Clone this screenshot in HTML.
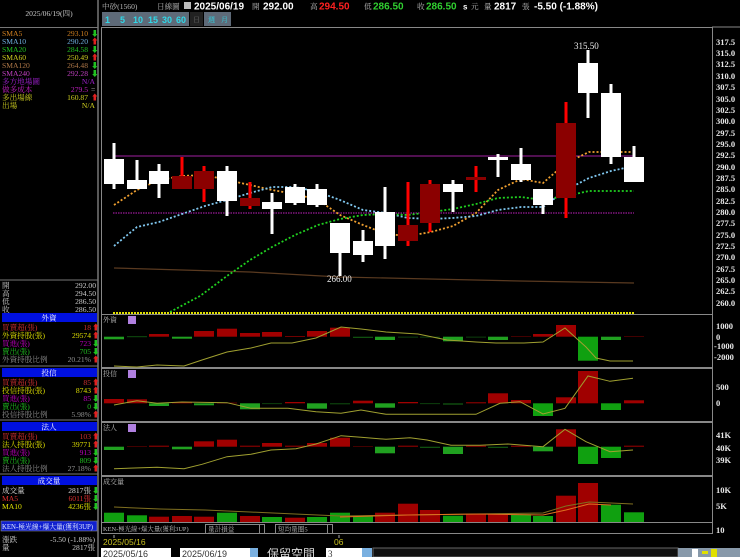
<!DOCTYPE html>
<html><head><meta charset="utf-8"><style>
html,body{margin:0;padding:0;background:#000;width:740px;height:557px;overflow:hidden}
svg{display:block}
text{font-family:"Liberation Serif","Noto Serif CJK SC","Noto Sans CJK TC",serif;font-size:7.6px}
.b{font-family:"Liberation Sans","Noto Sans CJK TC",sans-serif;font-weight:bold;font-size:10px}
.s{font-family:"Liberation Serif",serif;font-weight:bold;font-size:8.5px;fill:#e8e8e8}
</style></head><body>
<svg width="740" height="557" viewBox="0 0 740 557" xmlns="http://www.w3.org/2000/svg">
<rect width="740" height="557" fill="#000"/>
<line x1="98" y1="0" x2="98" y2="557" stroke="#777" stroke-width="1.5"/>
<text x="49" y="16" fill="#ccc" text-anchor="middle">2025/06/19(四)</text>
<line x1="0" y1="27.5" x2="98" y2="27.5" stroke="#777"/>
<g>
<text x="2" y="36" fill="#d08020">SMA5</text><text x="88" y="36" fill="#d08020" text-anchor="end">293.10</text><text x="91" y="36" fill="#20c020">⬇</text>
<text x="2" y="44" fill="#70b0e0">SMA10</text><text x="88" y="44" fill="#70b0e0" text-anchor="end">290.20</text><text x="91" y="44" fill="#e02020">⬆</text>
<text x="2" y="52" fill="#20c020">SMA20</text><text x="88" y="52" fill="#20c020" text-anchor="end">284.58</text><text x="91" y="52" fill="#20c020">⬇</text>
<text x="2" y="60" fill="#d0d020">SMA60</text><text x="88" y="60" fill="#d0d020" text-anchor="end">250.49</text><text x="91" y="60" fill="#e02020">⬆</text>
<text x="2" y="68" fill="#b07848">SMA120</text><text x="88" y="68" fill="#b07848" text-anchor="end">264.48</text><text x="91" y="68" fill="#20c020">⬇</text>
<text x="2" y="76" fill="#c040c0">SMA240</text><text x="88" y="76" fill="#c040c0" text-anchor="end">292.28</text><text x="91" y="76" fill="#20c020">⬇</text>
<text x="2" y="84" fill="#a020d0">多方地場圖</text><text x="95" y="84" fill="#a020d0" text-anchor="end">N/A</text>
<text x="2" y="92" fill="#c020c0">做多成本</text><text x="88" y="92" fill="#c020c0" text-anchor="end">279.5</text><text x="91" y="92" fill="#ccc">=</text>
<text x="2" y="100" fill="#d0d020">多出場線</text><text x="88" y="100" fill="#d0d020" text-anchor="end">160.87</text><text x="91" y="100" fill="#e02020">⬆</text>
<text x="2" y="108" fill="#d0d020">出場</text><text x="95" y="108" fill="#d0d020" text-anchor="end">N/A</text>
</g>
<line x1="0" y1="280" x2="98" y2="280" stroke="#777"/>
<g fill="#ccc">
<text x="2" y="288">開</text><text x="96" y="288" text-anchor="end">292.00</text>
<text x="2" y="296">高</text><text x="96" y="296" text-anchor="end">294.50</text>
<text x="2" y="304">低</text><text x="96" y="304" text-anchor="end">286.50</text>
<text x="2" y="312">收</text><text x="96" y="312" text-anchor="end">286.50</text>
</g>
<rect x="2" y="313" width="95" height="9" fill="#0010e0"/><text x="49" y="320.5" fill="#fff" text-anchor="middle">外資</text>
<text x="2" y="330" fill="#d03030">買賣超(張)</text><text x="91" y="330" fill="#d03030" text-anchor="end">18</text><text x="92" y="330" fill="#e02020">⬆</text>
<text x="2" y="338" fill="#e0e000">外資持股(張)</text><text x="91" y="338" fill="#e0e000" text-anchor="end">29574</text><text x="92" y="338" fill="#e02020">⬆</text>
<text x="2" y="346" fill="#c000c0">買進(張)</text><text x="91" y="346" fill="#c000c0" text-anchor="end">723</text><text x="92" y="346" fill="#20c020">⬇</text>
<text x="2" y="354" fill="#20c020">賣出(張)</text><text x="91" y="354" fill="#20c020" text-anchor="end">705</text><text x="92" y="354" fill="#20c020">⬇</text>
<text x="2" y="362" fill="#909090">外資持股比例</text><text x="91" y="362" fill="#909090" text-anchor="end">20.21%</text><text x="92" y="362" fill="#e02020">⬆</text>
<line x1="0" y1="366" x2="98" y2="366" stroke="#777"/>
<rect x="2" y="368" width="95" height="9" fill="#0010e0"/><text x="49" y="375.5" fill="#fff" text-anchor="middle">投信</text>
<text x="2" y="385" fill="#d03030">買賣超(張)</text><text x="91" y="385" fill="#d03030" text-anchor="end">85</text><text x="92" y="385" fill="#e02020">⬆</text>
<text x="2" y="393" fill="#e0e000">投信持股(張)</text><text x="91" y="393" fill="#e0e000" text-anchor="end">8743</text><text x="92" y="393" fill="#e02020">⬆</text>
<text x="2" y="401" fill="#c000c0">買進(張)</text><text x="91" y="401" fill="#c000c0" text-anchor="end">85</text><text x="92" y="401" fill="#20c020">⬇</text>
<text x="2" y="409" fill="#20c020">賣出(張)</text><text x="91" y="409" fill="#20c020" text-anchor="end">0</text><text x="92" y="409" fill="#20c020">⬇</text>
<text x="2" y="417" fill="#909090">投信持股比例</text><text x="91" y="417" fill="#909090" text-anchor="end">5.98%</text><text x="92" y="417" fill="#e02020">⬆</text>
<line x1="0" y1="420" x2="98" y2="420" stroke="#777"/>
<rect x="2" y="422" width="95" height="9" fill="#0010e0"/><text x="49" y="429.5" fill="#fff" text-anchor="middle">法人</text>
<text x="2" y="439" fill="#d03030">買賣超(張)</text><text x="91" y="439" fill="#d03030" text-anchor="end">103</text><text x="92" y="439" fill="#e02020">⬆</text>
<text x="2" y="447" fill="#e0e000">法人持股(張)</text><text x="91" y="447" fill="#e0e000" text-anchor="end">39771</text><text x="92" y="447" fill="#e02020">⬆</text>
<text x="2" y="455" fill="#c000c0">買進(張)</text><text x="91" y="455" fill="#c000c0" text-anchor="end">913</text><text x="92" y="455" fill="#20c020">⬇</text>
<text x="2" y="463" fill="#20c020">賣出(張)</text><text x="91" y="463" fill="#20c020" text-anchor="end">809</text><text x="92" y="463" fill="#20c020">⬇</text>
<text x="2" y="471" fill="#909090">法人持股比例</text><text x="91" y="471" fill="#909090" text-anchor="end">27.18%</text><text x="92" y="471" fill="#e02020">⬆</text>
<line x1="0" y1="474" x2="98" y2="474" stroke="#777"/>
<rect x="2" y="476" width="95" height="9" fill="#0010e0"/><text x="49" y="483.5" fill="#fff" text-anchor="middle">成交量</text>
<text x="2" y="493" fill="#ddd">成交量</text><text x="91" y="493" fill="#ddd" text-anchor="end">2817張</text><text x="92" y="493" fill="#20c020">⬇</text>
<text x="2" y="501" fill="#e03030">MA5</text><text x="91" y="501" fill="#e03030" text-anchor="end">6011張</text><text x="92" y="501" fill="#20c020">⬇</text>
<text x="2" y="509" fill="#e0e000">MA10</text><text x="91" y="509" fill="#e0e000" text-anchor="end">4236張</text><text x="92" y="509" fill="#20c020">⬇</text>
<rect x="1" y="521" width="96" height="10" fill="#1020d0" stroke="#888" stroke-width="0.6"/>
<text x="2" y="529" fill="#e0e8ff" style="font-size:6.8px">KEN-極光線+爆大量(獲利3UP)</text>
<text x="2" y="542" fill="#ccc">漲跌</text><text x="95" y="542" fill="#ccc" text-anchor="end">-5.50 (-1.88%)</text>
<text x="2" y="550" fill="#ccc">量</text><text x="95" y="550" fill="#ccc" text-anchor="end">2817張</text>

<text x="102" y="9" fill="#bbb">中砂(1560)</text>
<text x="157" y="9" fill="#bbb">日線圖</text>
<rect x="184" y="2" width="7" height="7" fill="#bbb"/>
<text x="194" y="9.5" class="b" fill="#fff">2025/06/19</text>
<text x="252" y="9" fill="#bbb">開</text><text x="263" y="9.5" class="b" fill="#fff">292.00</text>
<text x="310" y="9" fill="#bbb">高</text><text x="319" y="9.5" class="b" fill="#ff2020">294.50</text>
<text x="364" y="9" fill="#bbb">低</text><text x="373" y="9.5" class="b" fill="#30d030">286.50</text>
<text x="417" y="9" fill="#bbb">收</text><text x="426" y="9.5" class="b" fill="#30d030">286.50</text>
<text x="463" y="9.5" class="b" fill="#fff" style="font-size:8px">s</text><text x="471" y="9" fill="#bbb">元</text>
<text x="484" y="9" fill="#bbb">量</text><text x="494" y="9.5" class="b" fill="#fff">2817</text><text x="522" y="9" fill="#bbb">張</text>
<text x="534" y="9.5" class="b" fill="#fff">-5.50 (-1.88%)</text>
<rect x="102" y="12" width="87" height="14" fill="#5e6a78"/>
<text x="105" y="23" class="b" fill="#30d8e8" style="font-size:9px">1</text>
<text x="120" y="23" class="b" fill="#30d8e8" style="font-size:9px">5</text>
<text x="133" y="23" class="b" fill="#30d8e8" style="font-size:9px">10</text>
<text x="148" y="23" class="b" fill="#30d8e8" style="font-size:9px">15</text>
<text x="162" y="23" class="b" fill="#30d8e8" style="font-size:9px">30</text>
<text x="176" y="23" class="b" fill="#30d8e8" style="font-size:9px">60</text>
<rect x="190" y="12" width="13" height="14" fill="#222"/><text x="193" y="22" fill="#666" style="font-size:7px">日</text>
<rect x="204" y="12" width="27" height="14" fill="#5e6a78"/>
<text x="208" y="22" fill="#30d8e8" style="font-size:7px">週</text><text x="221" y="22" fill="#30d8e8" style="font-size:7px">月</text>

<g fill="none" stroke="#888" stroke-width="1">
<rect x="101.5" y="27.5" width="611" height="287"/>
<rect x="101.5" y="314.5" width="611" height="53"/>
<rect x="101.5" y="368.5" width="611" height="53"/>
<rect x="101.5" y="422.5" width="611" height="53"/>
<rect x="101.5" y="476.5" width="611" height="46"/>
<rect x="101.5" y="522.5" width="611" height="11"/>
</g>
<line x1="712" y1="27" x2="740" y2="27" stroke="#888"/>

<g>
<text x="716" y="45" class="s">317.5</text><text x="716" y="56" class="s">315.0</text><text x="716" y="67" class="s">312.5</text><text x="716" y="79" class="s">310.0</text><text x="716" y="90" class="s">307.5</text><text x="716" y="102" class="s">305.0</text><text x="716" y="113" class="s">302.5</text><text x="716" y="124" class="s">300.0</text><text x="716" y="136" class="s">297.5</text><text x="716" y="147" class="s">295.0</text><text x="716" y="158" class="s">292.5</text><text x="716" y="170" class="s">290.0</text><text x="716" y="181" class="s">287.5</text><text x="716" y="192" class="s">285.0</text><text x="716" y="204" class="s">282.5</text><text x="716" y="215" class="s">280.0</text><text x="716" y="226" class="s">277.5</text><text x="716" y="238" class="s">275.0</text><text x="716" y="249" class="s">272.5</text><text x="716" y="260" class="s">270.0</text><text x="716" y="272" class="s">267.5</text><text x="716" y="283" class="s">265.0</text><text x="716" y="294" class="s">262.5</text><text x="716" y="306" class="s">260.0</text>
<text x="716" y="329" class="s">1000</text><text x="716" y="340" class="s">0</text><text x="714" y="349" class="s">-1000</text><text x="714" y="360" class="s">-2000</text>
<text x="716" y="390" class="s">500</text><text x="716" y="406" class="s">0</text>
<text x="716" y="438" class="s">41K</text><text x="716" y="451" class="s">40K</text><text x="716" y="463" class="s">39K</text>
<text x="716" y="493" class="s">10K</text><text x="716" y="509" class="s">5K</text><text x="716" y="533" class="s">10</text>
</g>

<line x1="113" y1="156" x2="634" y2="156" stroke="#a020a0" stroke-width="1"/>
<line x1="113" y1="213" x2="634" y2="213" stroke="#c020c0" stroke-width="1" stroke-dasharray="1.5 1"/>
<polyline points="114,268 250,272 340,277 430,279 520,281 634,283" fill="none" stroke="#5a3a20" stroke-width="1.2"/>
<line x1="113" y1="313" x2="634" y2="313" stroke="#e0e000" stroke-width="2" stroke-dasharray="2 1"/>
<polyline points="114,205 137,190 159,180 182,176 205,175 227,180 250,185 272,190 295,194 318,200 340,215 363,225 386,234 408,236 431,232 453,226 476,213 498,190 521,179 543,183 566,163 589,152 611,152 634,152" fill="none" stroke="#f0a030" stroke-width="1.8" stroke-dasharray="2 2"/>
<polyline points="114,246 137,227 159,222 182,214 205,206 227,200 250,193 272,187 295,187 318,192 340,200 363,210 386,213 408,218 431,219 453,218 476,216 498,210 521,207 543,207 566,190 589,178 611,171 634,166" fill="none" stroke="#80c8f0" stroke-width="1.8" stroke-dasharray="2 2"/>
<polyline points="170,312 200,296 227,276 250,260 272,247 295,235 318,225 340,219 363,215 386,214 408,215 431,212 453,209 476,204 498,198 521,197 543,200 566,196 589,191 611,191 634,191" fill="none" stroke="#20d020" stroke-width="1.8" stroke-dasharray="2 2"/>

<g>
<rect x="112.5" y="143" width="3" height="46" fill="#fff"/><rect x="104" y="159" width="20" height="25" fill="#fff"/>
<rect x="135.5" y="160" width="3" height="29" fill="#fff"/><rect x="127" y="180" width="20" height="9" fill="#fff"/>
<rect x="157.5" y="164" width="3" height="34" fill="#fff"/><rect x="149" y="171" width="20" height="13" fill="#fff"/>
<rect x="180.5" y="157" width="3" height="32" fill="#f00"/><rect x="172" y="176" width="20" height="13" fill="#8b0000"/>
<rect x="202.5" y="166" width="3" height="36" fill="#f00"/><rect x="194" y="171" width="20" height="18" fill="#8b0000"/>
<rect x="225.5" y="166" width="3" height="50" fill="#fff"/><rect x="217" y="171" width="20" height="30" fill="#fff"/>
<rect x="248.5" y="182" width="3" height="27" fill="#f00"/><rect x="240" y="198" width="20" height="8" fill="#8b0000"/>
<rect x="270.5" y="193" width="3" height="41" fill="#fff"/><rect x="262" y="202" width="20" height="7" fill="#fff"/>
<rect x="293.5" y="184" width="3" height="21" fill="#fff"/><rect x="285" y="187" width="20" height="16" fill="#fff"/>
<rect x="315.5" y="184" width="3" height="23" fill="#fff"/><rect x="307" y="189" width="20" height="16" fill="#fff"/>
<rect x="338.5" y="223" width="3" height="53" fill="#fff"/><rect x="330" y="223" width="20" height="30" fill="#fff"/>
<rect x="361.5" y="230" width="3" height="32" fill="#fff"/><rect x="353" y="241" width="20" height="14" fill="#fff"/>
<rect x="383.5" y="187" width="3" height="72" fill="#fff"/><rect x="375" y="212" width="20" height="34" fill="#fff"/>
<rect x="406.5" y="182" width="3" height="64" fill="#f00"/><rect x="398" y="225" width="20" height="16" fill="#8b0000"/>
<rect x="428.5" y="180" width="3" height="52" fill="#f00"/><rect x="420" y="184" width="20" height="39" fill="#8b0000"/>
<rect x="451.5" y="180" width="3" height="32" fill="#fff"/><rect x="443" y="184" width="20" height="8" fill="#fff"/>
<rect x="474.5" y="166" width="3" height="26" fill="#f00"/><rect x="466" y="177" width="20" height="3" fill="#8b0000"/>
<rect x="496.5" y="154" width="3" height="23" fill="#fff"/><rect x="488" y="157" width="20" height="3" fill="#fff"/>
<rect x="519.5" y="148" width="3" height="34" fill="#fff"/><rect x="511" y="164" width="20" height="16" fill="#fff"/>
<rect x="541.5" y="189" width="3" height="25" fill="#fff"/><rect x="533" y="189" width="20" height="16" fill="#fff"/>
<rect x="564.5" y="102" width="3" height="116" fill="#f00"/><rect x="556" y="123" width="20" height="75" fill="#8b0000"/>
<rect x="586.5" y="50" width="3" height="68" fill="#fff"/><rect x="578" y="63" width="20" height="30" fill="#fff"/>
<rect x="609.5" y="84" width="3" height="80" fill="#fff"/><rect x="601" y="93" width="20" height="64" fill="#fff"/>
<rect x="632.5" y="146" width="3" height="36" fill="#fff"/><rect x="624" y="157" width="20" height="25" fill="#fff"/>
</g>
<text x="574" y="49" fill="#eee" style="font-size:9px">315.50</text>
<text x="327" y="282" fill="#eee" style="font-size:9px">266.00</text>

<text x="103" y="322" fill="#bbb" style="font-size:7px">外資</text><rect x="128" y="316" width="8" height="8" fill="#b080e0"/>
<text x="103" y="376" fill="#bbb" style="font-size:7px">投信</text><rect x="128" y="370" width="8" height="8" fill="#b080e0"/>
<text x="103" y="430" fill="#bbb" style="font-size:7px">法人</text><rect x="128" y="424" width="8" height="8" fill="#b080e0"/>
<text x="103" y="484" fill="#bbb" style="font-size:7px">成交量</text>

<g>
<rect x="104" y="336.7" width="20" height="2.6" fill="#20a020"/><rect x="127" y="336.2" width="20" height="1" fill="#105010"/>
<rect x="149" y="334" width="20" height="2.7" fill="#a00000"/><rect x="172" y="336.7" width="20" height="2" fill="#20a020"/>
<rect x="194" y="331" width="20" height="5.7" fill="#a00000"/><rect x="217" y="328.7" width="20" height="8" fill="#a00000"/>
<rect x="240" y="333" width="20" height="3.7" fill="#a00000"/><rect x="262" y="332" width="20" height="4.7" fill="#a00000"/>
<rect x="285" y="336" width="20" height="0.7" fill="#a00000"/><rect x="307" y="331" width="20" height="5.7" fill="#a00000"/>
<rect x="330" y="327.7" width="20" height="9" fill="#a00000"/><rect x="353" y="336.7" width="20" height="1.3" fill="#105010"/>
<rect x="375" y="336.7" width="20" height="3.3" fill="#20a020"/><rect x="398" y="336.7" width="20" height="0.8" fill="#105010"/>
<rect x="420" y="336.7" width="20" height="0.8" fill="#105010"/><rect x="443" y="336.7" width="20" height="4.6" fill="#20a020"/>
<rect x="466" y="336.7" width="20" height="0.8" fill="#105010"/><rect x="488" y="336.7" width="20" height="3.3" fill="#20a020"/>
<rect x="511" y="336" width="20" height="0.7" fill="#600000"/><rect x="533" y="334" width="20" height="2.7" fill="#a00000"/>
<rect x="556" y="325" width="20" height="11.7" fill="#a00000"/><rect x="578" y="336.7" width="20" height="24" fill="#10a010"/>
<rect x="601" y="336.7" width="20" height="3.3" fill="#20a020"/><rect x="624" y="336" width="20" height="0.7" fill="#600000"/>
</g>
<polyline points="114,366 137,367 157,365 184,366 202,360 227,352 251,348 271,343 292,343 316,338 341,327 361,329 386,332 418,334 447,340 476,342 496,343 524,343 543,342 565,328 586,347 596,358 610,361 633,361" fill="none" stroke="#a0a030" stroke-width="1"/>
<g>
<rect x="104" y="399" width="20" height="4.3" fill="#a00000"/><rect x="127" y="399.3" width="20" height="4" fill="#a00000"/>
<rect x="149" y="403.3" width="20" height="2.7" fill="#20a020"/><rect x="172" y="402" width="20" height="1.3" fill="#a00000"/>
<rect x="194" y="403.3" width="20" height="2" fill="#20a020"/><rect x="217" y="402.7" width="20" height="0.6" fill="#a00000"/>
<rect x="240" y="403.3" width="20" height="6" fill="#20a020"/><rect x="262" y="403.3" width="20" height="0.8" fill="#105010"/>
<rect x="285" y="402" width="20" height="1.3" fill="#a00000"/><rect x="307" y="403.3" width="20" height="5.4" fill="#20a020"/>
<rect x="330" y="403.3" width="20" height="1" fill="#105010"/><rect x="353" y="400.7" width="20" height="2.6" fill="#a00000"/>
<rect x="375" y="403.3" width="20" height="4.4" fill="#20a020"/><rect x="398" y="402" width="20" height="1.3" fill="#a00000"/>
<rect x="420" y="403.3" width="20" height="0.8" fill="#105010"/><rect x="443" y="403.3" width="20" height="1.4" fill="#105010"/>
<rect x="466" y="402.3" width="20" height="1" fill="#a00000"/><rect x="488" y="393.3" width="20" height="10" fill="#a00000"/>
<rect x="511" y="400" width="20" height="3.3" fill="#a00000"/><rect x="533" y="403.3" width="20" height="12.7" fill="#10a010"/>
<rect x="556" y="397.3" width="20" height="6" fill="#a00000"/><rect x="578" y="371" width="20" height="32.3" fill="#a00000"/>
<rect x="601" y="403.3" width="20" height="6.7" fill="#10a010"/><rect x="624" y="400.3" width="20" height="3" fill="#a00000"/>
</g>
<polyline points="114,405 137,400.7 157,403.3 182,402 227,402.7 251,408.3 288,408.3 316,411.7 341,413.3 361,410 386,414.3 476,414.3 500,403.3 520,401.7 543,414 565,408.3 588,376 610,381.3 633,378.3" fill="none" stroke="#a0a030" stroke-width="1"/>
<g>
<rect x="104" y="446.7" width="20" height="3.3" fill="#20a020"/><rect x="127" y="446" width="20" height="0.7" fill="#600000"/>
<rect x="149" y="445.7" width="20" height="1" fill="#a00000"/><rect x="172" y="446.7" width="20" height="2.6" fill="#20a020"/>
<rect x="194" y="441.3" width="20" height="5.4" fill="#a00000"/><rect x="217" y="439.7" width="20" height="7" fill="#a00000"/>
<rect x="240" y="445.7" width="20" height="1" fill="#a00000"/><rect x="262" y="443" width="20" height="3.7" fill="#a00000"/>
<rect x="285" y="445.7" width="20" height="1" fill="#a00000"/><rect x="307" y="443" width="20" height="3.7" fill="#a00000"/>
<rect x="330" y="437.7" width="20" height="9" fill="#a00000"/><rect x="353" y="446" width="20" height="0.7" fill="#600000"/>
<rect x="375" y="446.7" width="20" height="6.6" fill="#20a020"/><rect x="398" y="445.7" width="20" height="1" fill="#a00000"/>
<rect x="420" y="446.7" width="20" height="1.3" fill="#105010"/><rect x="443" y="446.7" width="20" height="7.3" fill="#20a020"/>
<rect x="466" y="445.7" width="20" height="1" fill="#a00000"/><rect x="488" y="446.7" width="20" height="1.3" fill="#105010"/>
<rect x="511" y="445.7" width="20" height="1" fill="#a00000"/><rect x="533" y="446.7" width="20" height="4.6" fill="#20a020"/>
<rect x="556" y="429.3" width="20" height="17.4" fill="#a00000"/><rect x="578" y="446.7" width="20" height="17.3" fill="#10a010"/>
<rect x="601" y="446.7" width="20" height="11.3" fill="#10a010"/><rect x="624" y="445.7" width="20" height="1" fill="#a00000"/>
</g>
<polyline points="114,468.7 157,467.3 184,468.7 202,464.3 227,456.7 251,454.3 271,450 296,448.7 316,444 341,435.7 361,437.3 386,439.3 410,437.7 427,440 451,445.3 480,445.3 508,444 543,446.7 565,429.3 586,441.7 610,451.7 633,450" fill="none" stroke="#a0a030" stroke-width="1"/>
<g>
<rect x="104" y="512.7" width="20" height="9.3" fill="#10a010"/><rect x="127" y="515.3" width="20" height="6.7" fill="#10a010"/>
<rect x="149" y="516.7" width="20" height="5.3" fill="#a00000"/><rect x="172" y="516" width="20" height="6" fill="#a00000"/>
<rect x="194" y="516.7" width="20" height="5.3" fill="#a00000"/><rect x="217" y="512.7" width="20" height="9.3" fill="#10a010"/>
<rect x="240" y="516" width="20" height="6" fill="#a00000"/><rect x="262" y="517" width="20" height="5" fill="#10a010"/>
<rect x="285" y="517.7" width="20" height="4.3" fill="#a00000"/><rect x="307" y="517" width="20" height="5" fill="#10a010"/>
<rect x="330" y="512.7" width="20" height="9.3" fill="#10a010"/><rect x="353" y="516.3" width="20" height="5.7" fill="#10a010"/>
<rect x="375" y="512.7" width="20" height="9.3" fill="#a00000"/><rect x="398" y="503.7" width="20" height="18.3" fill="#a00000"/>
<rect x="420" y="510" width="20" height="12" fill="#a00000"/><rect x="443" y="515.7" width="20" height="6.3" fill="#10a010"/>
<rect x="466" y="513.7" width="20" height="8.3" fill="#a00000"/><rect x="488" y="513.7" width="20" height="8.3" fill="#a00000"/>
<rect x="511" y="514.3" width="20" height="7.7" fill="#10a010"/><rect x="533" y="516" width="20" height="6" fill="#10a010"/>
<rect x="556" y="495.7" width="20" height="26.3" fill="#a00000"/><rect x="578" y="483" width="20" height="39" fill="#a00000"/>
<rect x="601" y="504.7" width="20" height="17.3" fill="#10a010"/><rect x="624" y="512.3" width="20" height="9.7" fill="#10a010"/>
</g>
<polyline points="114,507 160,509 205,510 250,512 295,514 340,516 408,515 476,514 543,513 566,506 589,502 633,504" fill="none" stroke="#807020" stroke-width="1"/>
<polyline points="340,517 408,515 476,514 543,515 566,510 589,504 611,505" fill="none" stroke="#e07020" stroke-width="1"/>

<text x="103" y="531" fill="#bbb" style="font-size:6.4px">KEN-極光線+爆大量(獲利3UP)</text>
<rect x="205.5" y="524.5" width="59" height="9" fill="#000" stroke="#888"/><text x="208" y="531.5" fill="#bbb" style="font-size:6.6px">量計損益</text><line x1="259.5" y1="524" x2="259.5" y2="534" stroke="#888"/>
<rect x="275.5" y="524.5" width="57" height="9" fill="#000" stroke="#888"/><text x="278" y="531.5" fill="#bbb" style="font-size:6.6px">短均量圈5</text><line x1="327.5" y1="524" x2="327.5" y2="534" stroke="#888"/>
<line x1="114" y1="535" x2="114" y2="538" stroke="#aaa"/><line x1="339" y1="535" x2="339" y2="538" stroke="#aaa"/>
<text x="103" y="545" fill="#c8c020" style="font-family:'Liberation Sans',sans-serif;font-size:8.5px">2025/05/16</text>
<text x="334" y="545" fill="#c8c020" style="font-family:'Liberation Sans',sans-serif;font-size:8.5px">06</text>
<rect x="101" y="548" width="70" height="9" fill="#fff"/><text x="103" y="557" fill="#333" style="font-family:'Liberation Sans',sans-serif;font-size:9px">2025/05/16</text>
<rect x="180" y="548" width="70" height="9" fill="#fff"/><text x="182" y="557" fill="#333" style="font-family:'Liberation Sans',sans-serif;font-size:9px">2025/06/19</text>
<rect x="250" y="548" width="8" height="9" fill="#7ab0e0"/>
<text x="267" y="558" fill="#ddd" style="font-family:'Noto Sans CJK TC',sans-serif;font-size:12px">保留空間</text>
<rect x="326" y="548" width="36" height="9" fill="#fff"/><text x="328" y="557" fill="#333" style="font-size:9px">3</text>
<rect x="362" y="548" width="10" height="9" fill="#7ab0e0"/>
<rect x="373" y="548" width="305" height="9" fill="#111" stroke="#666"/>
<rect x="678" y="548" width="62" height="9" fill="#8899aa"/>
<rect x="692" y="549" width="6" height="8" fill="#fff"/><rect x="702" y="551" width="6" height="3" fill="#e0e000"/><rect x="711" y="549" width="6" height="8" fill="#e0e000"/>
</svg>
</body></html>
